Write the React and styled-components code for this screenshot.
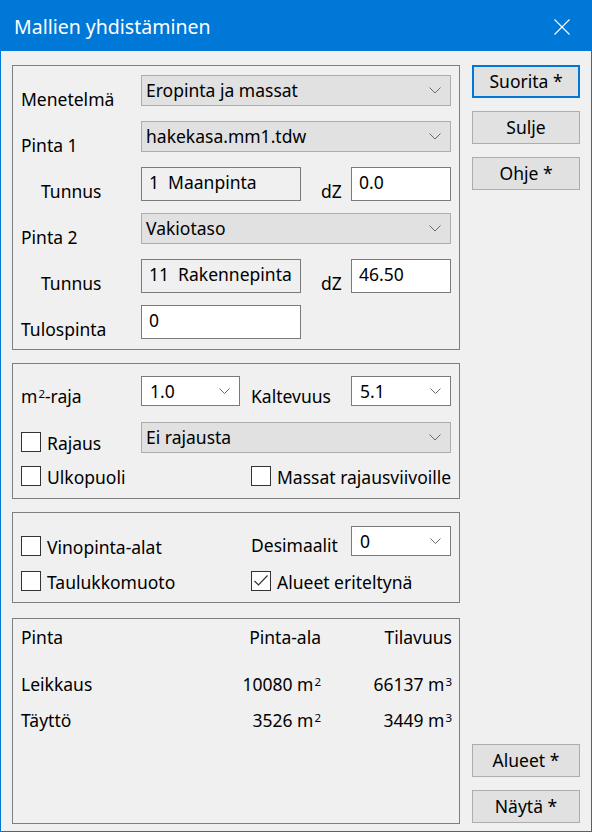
import React from 'react'
import styled, { createGlobalStyle } from 'styled-components'

const GlobalStyle = createGlobalStyle`
  html, body {
    margin: 0;
    padding: 0;
    background: #f0f0f0;
  }
  * {
    box-sizing: border-box;
  }
  body {
    font-family: 'Noto Sans', 'DejaVu Sans', sans-serif;
    font-size: 17.5px;
    color: #000;
  }
`

const Chevron = ({ small }) => (
  <ChevronIcon
    width={small ? 11 : 12}
    height={small ? 6 : 7}
    viewBox={small ? '0 0 11 6' : '0 0 12 7'}
  >
    <path
      d={small ? 'M0.5 0.5 L5.5 5.5 L10.5 0.5' : 'M0.5 0.5 L6 6 L11.5 0.5'}
      fill="none"
      stroke="#6a6a6a"
      strokeWidth="1"
    />
  </ChevronIcon>
)

const Checkbox = ({ checked, children }) => (
  <Check>
    <Box>
      {checked && (
        <svg width="16" height="16" viewBox="0 0 16 16">
          <path d="M1.5 8 L5.5 12 L14.5 2.5" fill="none" stroke="#333" strokeWidth="1.2" />
        </svg>
      )}
    </Box>
    <CheckText>{children}</CheckText>
  </Check>
)

const App = () => {
  return (
    <>
      <GlobalStyle />
      <Window>
        <TitleBar>
          <Title>Mallien yhdistäminen</Title>
          <CloseIcon width="16" height="16" viewBox="0 0 16 16">
            <path d="M0.5 0.5 L15.5 15.5 M15.5 0.5 L0.5 15.5" stroke="#fff" strokeWidth="1.1" />
          </CloseIcon>
        </TitleBar>

        <Body>
          <MainColumn>
            <Group $pt={9} $pb={10}>
              <Row $h={46}>
                <Cell $w={120} $top={14}>Menetelmä</Cell>
                <Field $kind="select" $w={310} $h={31}>
                  Eropinta ja massat
                  <Chevron />
                </Field>
              </Row>
              <Row $h={46}>
                <Cell $w={120} $top={14}>Pinta 1</Cell>
                <Field $kind="select" $w={310} $h={31}>
                  hakekasa.mm1.tdw
                  <Chevron />
                </Field>
              </Row>
              <Row $h={46}>
                <Cell $w={120} $top={14} $indent={20}>Tunnus</Cell>
                <Field $kind="readonly" $w={160} $h={34}>{'1  Maanpinta'}</Field>
                <Cell $w={50} $top={14} $indent={20}>dZ</Cell>
                <Field $kind="input" $w={100} $h={34}>0.0</Field>
              </Row>
              <Row $h={46}>
                <Cell $w={120} $top={14}>Pinta 2</Cell>
                <Field $kind="select" $w={310} $h={31}>
                  Vakiotaso
                  <Chevron />
                </Field>
              </Row>
              <Row $h={46}>
                <Cell $w={120} $top={14} $indent={20}>Tunnus</Cell>
                <Field $kind="readonly" $w={160} $h={34}>{'11  Rakennepinta'}</Field>
                <Cell $w={50} $top={14} $indent={20}>dZ</Cell>
                <Field $kind="input" $w={100} $h={34}>46.50</Field>
              </Row>
              <Row $h={34}>
                <Cell $w={120} $top={14}>Tulospinta</Cell>
                <Field $kind="input" $w={160} $h={34}>0</Field>
              </Row>
            </Group>

            <Group $pt={12} $pb={12}>
              <Row $h={46}>
                <Cell $w={120} $top={10}>m<Sup>2</Sup>-raja</Cell>
                <Field $kind="combo" $w={99} $h={30}>
                  1.0
                  <Chevron small />
                </Field>
                <Cell $w={111} $top={10} $indent={11}>Kaltevuus</Cell>
                <Field $kind="combo" $w={100} $h={30}>
                  5.1
                  <Chevron small />
                </Field>
              </Row>
              <Row $h={44}>
                <Cell $w={120} $top={10}>
                  <Checkbox>Rajaus</Checkbox>
                </Cell>
                <Field $kind="select" $w={310} $h={31}>
                  Ei rajausta
                  <Chevron />
                </Field>
              </Row>
              <Row $h={20}>
                <Cell $w={230}>
                  <Checkbox>Ulkopuoli</Checkbox>
                </Cell>
                <Checkbox>Massat rajausviivoille</Checkbox>
              </Row>
            </Group>

            <Group $pt={13} $pb={11}>
              <Row $h={45}>
                <Cell $w={230} $top={10}>
                  <Checkbox>Vinopinta-alat</Checkbox>
                </Cell>
                <Cell $w={100} $top={9}>Desimaalit</Cell>
                <Field $kind="combo" $w={100} $h={30}>
                  0
                  <Chevron small />
                </Field>
              </Row>
              <Row $h={20}>
                <Cell $w={230}>
                  <Checkbox>Taulukkomuoto</Checkbox>
                </Cell>
                <Checkbox checked>Alueet eriteltynä</Checkbox>
              </Row>
            </Group>

            <ResultGroup>
              <ResultTable>
                <span>Pinta</span>
                <Num>Pinta-ala</Num>
                <Num>Tilavuus</Num>
                <span>Leikkaus</span>
                <Num>10080 m<Sup>2</Sup></Num>
                <Num>66137 m<Sup>3</Sup></Num>
                <span>Täyttö</span>
                <Num>3526 m<Sup>2</Sup></Num>
                <Num>3449 m<Sup>3</Sup></Num>
              </ResultTable>
            </ResultGroup>
          </MainColumn>

          <SideColumn>
            <Button $default>Suorita *</Button>
            <Button>Sulje</Button>
            <Button>Ohje *</Button>
            <Spacer />
            <Button>Alueet *</Button>
            <Button>Näytä *</Button>
          </SideColumn>
        </Body>
      </Window>
    </>
  )
}

const fieldLook = {
  select: 'background: #e1e1e1; border-color: #adadad; padding-left: 4px;',
  combo: 'background: #fff; border-color: #7a7a7a; padding-left: 8px;',
  input: 'background: #fff; border-color: #7a7a7a; padding-left: 7px;',
  readonly: 'background: #f0f0f0; border-color: #7a7a7a; padding-left: 7px;'
}

const Window = styled.div`
  width: 592px;
  height: 832px;
  border: 1px solid #0078d7;
  border-top: 0;
  background: #f0f0f0;
  display: flex;
  flex-direction: column;
`

const TitleBar = styled.div`
  height: 51px;
  flex: none;
  background: #0078d7;
  color: #fff;
  display: flex;
  align-items: center;
  justify-content: space-between;
  padding: 3px 21px 0 13px;
`

const Title = styled.div`
  font-size: 19.5px;
  line-height: 24px;
`

const CloseIcon = styled.svg`
  display: block;
`

const Body = styled.div`
  flex: 1;
  min-height: 0;
  display: flex;
  gap: 12px;
  padding: 14px 10px 7px 11px;
`

const MainColumn = styled.div`
  width: 448px;
  flex: none;
  display: flex;
  flex-direction: column;
  gap: 13px;
`

const Group = styled.div`
  border: 1px solid #7f7f7f;
  padding: ${p => p.$pt}px 7px ${p => p.$pb}px 8px;
  display: flex;
  flex-direction: column;
`

const ResultGroup = styled.div`
  flex: 1;
  margin-top: 2px;
  border: 1px solid #7f7f7f;
  padding: 8px 7px 0 8px;
`

const ResultTable = styled.div`
  display: grid;
  grid-template-columns: 1fr 120px 131px;
  grid-template-rows: 47px 36px 20px;
  line-height: 20px;
  white-space: nowrap;
`

const Num = styled.span`
  text-align: right;
`

const Sup = styled.span`
  font-size: 11.5px;
  vertical-align: 5px;
  line-height: 0;
  margin-left: 1px;
`

const Row = styled.div`
  height: ${p => p.$h}px;
  display: flex;
  align-items: flex-start;
  flex: none;
`

const Cell = styled.div`
  width: ${p => p.$w}px;
  flex: none;
  margin-top: ${p => p.$top || 0}px;
  padding-left: ${p => p.$indent || 0}px;
  line-height: 20px;
  white-space: nowrap;
`

const Field = styled.div`
  width: ${p => p.$w}px;
  height: ${p => p.$h}px;
  flex: none;
  border: 1px solid;
  ${p => fieldLook[p.$kind]}
  padding-top: 4px;
  padding-right: 9px;
  display: flex;
  justify-content: space-between;
  line-height: 20px;
  white-space: pre;
`

const ChevronIcon = styled.svg`
  display: block;
  align-self: center;
  margin-top: -4px;
  flex: none;
`

const Check = styled.div`
  display: flex;
  align-items: flex-start;
  gap: 6px;
  line-height: 20px;
  white-space: nowrap;
`

const Box = styled.span`
  width: 20px;
  height: 20px;
  flex: none;
  border: 1px solid #333;
  background: #fff;
  display: flex;
  align-items: center;
  justify-content: center;
`

const CheckText = styled.span`
  padding-top: 1px;
`

const SideColumn = styled.div`
  width: 108px;
  flex: none;
  display: flex;
  flex-direction: column;
  gap: 13px;
  padding-bottom: 1px;
`

const Spacer = styled.div`
  flex: 1;
`

const Button = styled.div`
  height: 33px;
  flex: none;
  background: #e1e1e1;
  border: ${p => (p.$default ? '2px solid #0078d7' : '1px solid #adadad')};
  display: flex;
  align-items: center;
  justify-content: center;
  line-height: 20px;
  padding-bottom: 1px;
`

export default App
